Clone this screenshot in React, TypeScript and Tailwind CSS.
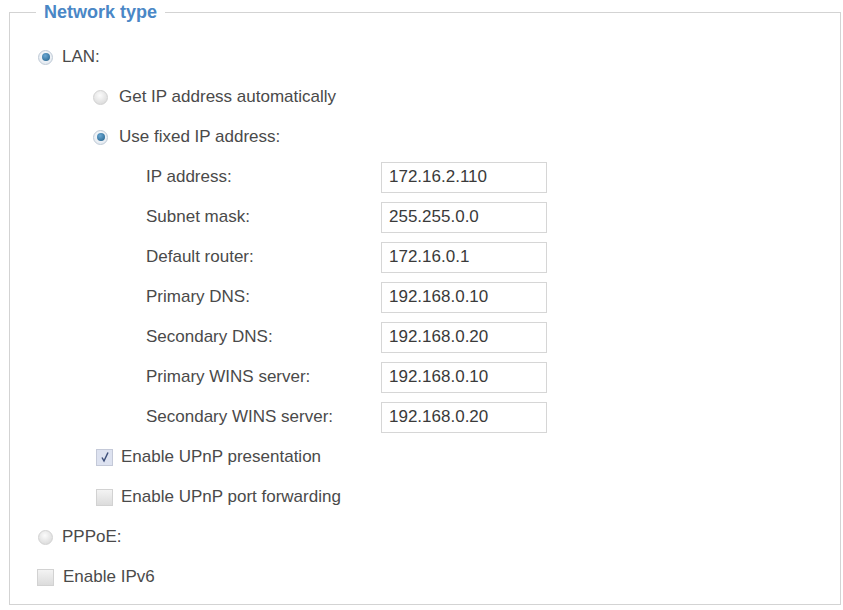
import type { ReactNode } from 'react';

const font = { fontFamily: '"Liberation Sans", Arial, sans-serif' };

function Radio({ checked }: { checked?: boolean }) {
  return (
    <span
      className={
        checked
          ? 'flex h-[15px] w-[15px] shrink-0 items-center justify-center rounded-full border border-[#bfcad6] bg-[radial-gradient(circle_at_50%_40%,#ffffff,#dbe3ec)]'
          : 'flex h-[15px] w-[15px] shrink-0 rounded-full border border-[#d2d2d2] bg-[radial-gradient(circle_at_45%_35%,#fbfbfb,#d4d4d4)]'
      }
    >
      {checked && <span className="h-[8px] w-[8px] rounded-full bg-[radial-gradient(circle_at_40%_35%,#6aa8d4,#1f5d86)]" />}
    </span>
  );
}

function Checkbox({ checked }: { checked?: boolean }) {
  return (
    <span
      className={
        checked
          ? 'flex h-[17px] w-[17px] shrink-0 items-center justify-center border border-[#c4c9d8] bg-[#dde2f0]'
          : 'flex h-[17px] w-[17px] shrink-0 border border-[#d2d2d2] bg-[linear-gradient(#f3f3f3,#dcdcdc)]'
      }
    >
      {checked && (
        <svg width="12" height="12" viewBox="0 0 12 12">
          <path d="M3 6.5 L5 10 L9 1.5" fill="none" stroke="#3d4f7a" strokeWidth="1.5" />
        </svg>
      )}
    </span>
  );
}

function Row({ indent, children }: { indent: string; children: ReactNode }) {
  return <div className={`flex h-[40px] items-center ${indent}`}>{children}</div>;
}

const fields = [
  ['IP address:', '172.16.2.110'],
  ['Subnet mask:', '255.255.0.0'],
  ['Default router:', '172.16.0.1'],
  ['Primary DNS:', '192.168.0.10'],
  ['Secondary DNS:', '192.168.0.20'],
  ['Primary WINS server:', '192.168.0.10'],
  ['Secondary WINS server:', '192.168.0.20'],
];

export default function App() {
  return (
    <div className="h-[610px] w-[843px] bg-white pl-[9px] pt-[1px] text-[17px] text-[#4a4a4a]" style={font}>
      <fieldset className="h-[604px] w-[832px] border border-[#d3d3d3]">
        <legend className="ml-[26px] px-[8px] text-[18px] leading-[22px] font-bold text-[#4a87c6]">Network type</legend>
        <div className="pt-[14px]">
          <Row indent="pl-[28px]">
            <Radio checked />
            <span className="ml-[9px]">LAN:</span>
          </Row>
          <Row indent="pl-[83px]">
            <Radio />
            <span className="ml-[11px]">Get IP address automatically</span>
          </Row>
          <Row indent="pl-[83px]">
            <Radio checked />
            <span className="ml-[11px]">Use fixed IP address:</span>
          </Row>
          {fields.map(([label, value]) => (
            <Row key={label} indent="pl-[136px]">
              <span className="w-[235px]">{label}</span>
              <div className="flex h-[31px] w-[166px] items-center border border-[#d6d6d6] bg-white px-[7px] text-[#3a3a3a]">
                {value}
              </div>
            </Row>
          ))}
          <Row indent="pl-[86px]">
            <Checkbox checked />
            <span className="ml-[8px]">Enable UPnP presentation</span>
          </Row>
          <Row indent="pl-[86px]">
            <Checkbox />
            <span className="ml-[8px]">Enable UPnP port forwarding</span>
          </Row>
          <Row indent="pl-[28px]">
            <Radio />
            <span className="ml-[9px]">PPPoE:</span>
          </Row>
          <Row indent="pl-[27px]">
            <Checkbox />
            <span className="ml-[9px]">Enable IPv6</span>
          </Row>
        </div>
      </fieldset>
    </div>
  );
}
